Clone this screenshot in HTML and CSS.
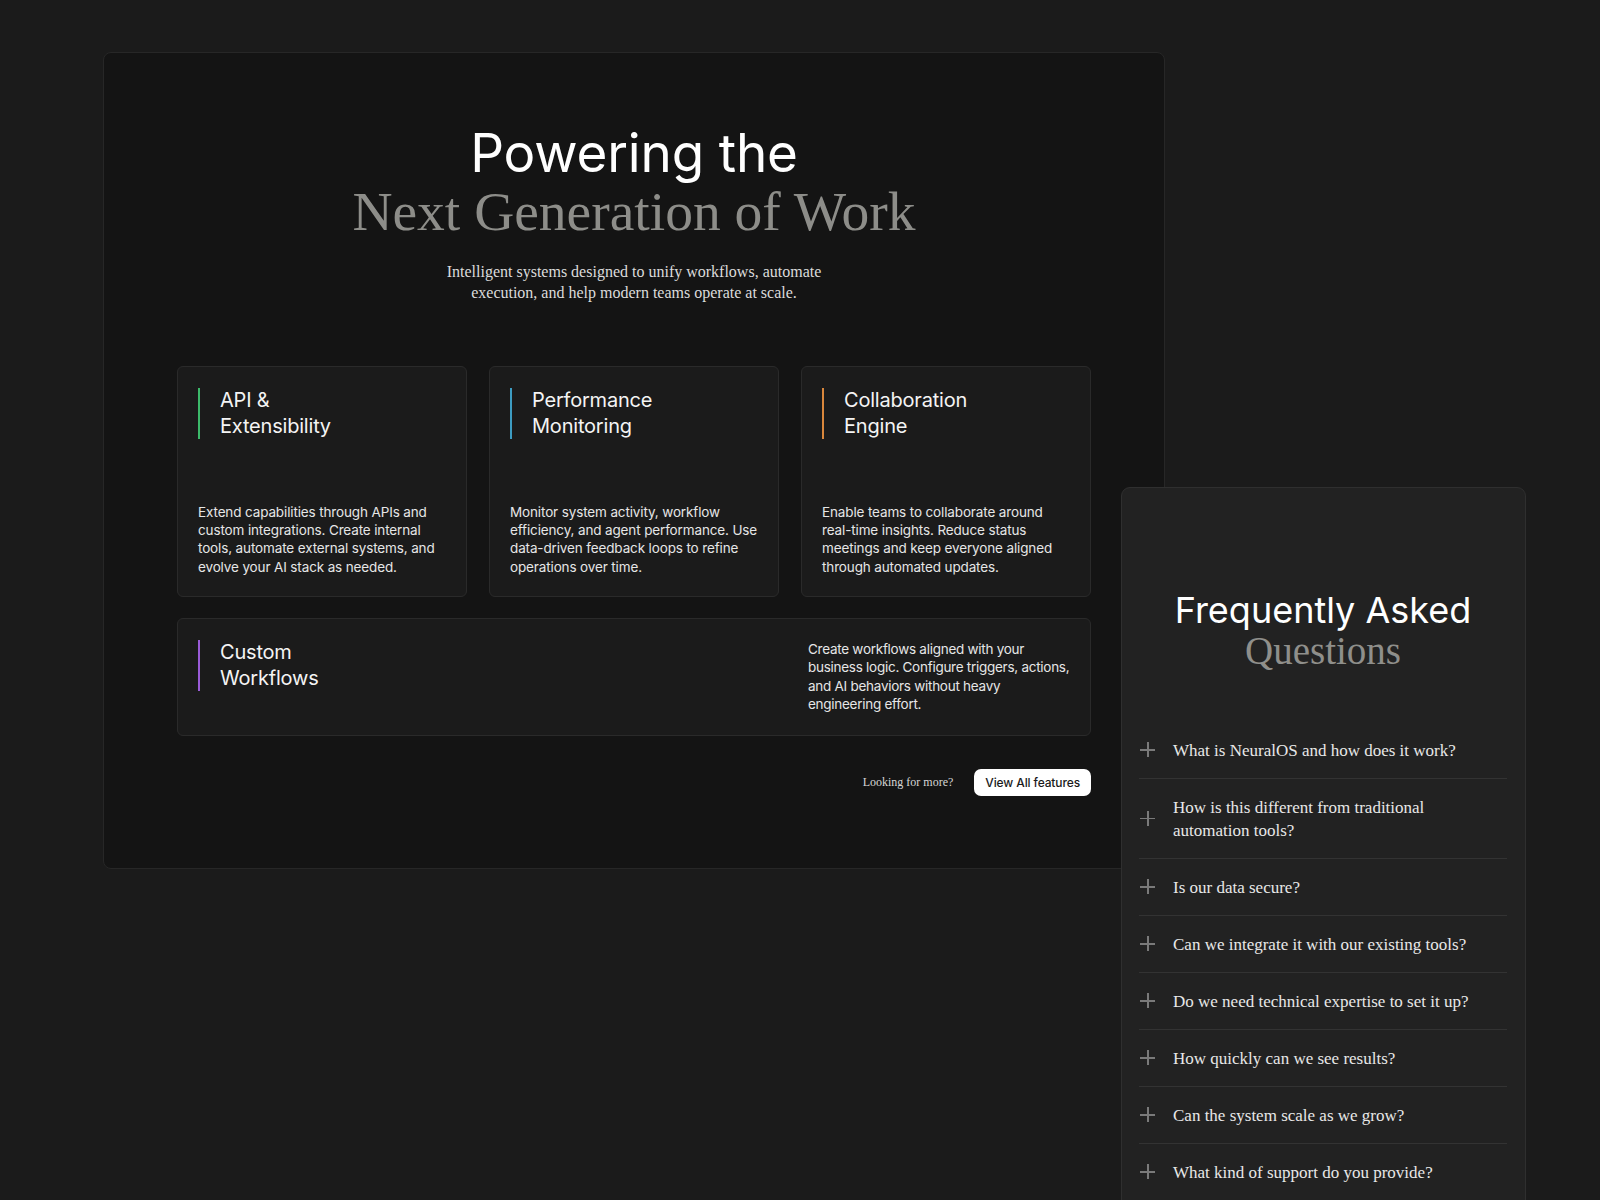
FILE: index.html
```html
<!DOCTYPE html>
<html lang="en">
<head>
<meta charset="utf-8">
<title>Powering the Next Generation of Work</title>
<link rel="stylesheet" href="styles.css">
</head>
<body>
<div class="canvas">
  <section class="features-window">
    <header class="hero">
      <h1 class="hero-title">
        <span class="hero-sans">Powering the</span>
        <span class="hero-serif">Next Generation of Work</span>
      </h1>
      <p class="hero-sub">Intelligent systems designed to unify workflows, automate<br>execution, and help modern teams operate at scale.</p>
    </header>

    <div class="feature-grid">
      <article class="feature-card">
        <h3 class="feature-title accent-green">API &amp;<br>Extensibility</h3>
        <p class="feature-desc">Extend capabilities through APIs and<br>custom integrations. Create internal<br>tools, automate external systems, and<br>evolve your AI stack as needed.</p>
      </article>
      <article class="feature-card">
        <h3 class="feature-title accent-blue">Performance<br>Monitoring</h3>
        <p class="feature-desc">Monitor system activity, workflow<br>efficiency, and agent performance. Use<br>data-driven feedback loops to refine<br>operations over time.</p>
      </article>
      <article class="feature-card">
        <h3 class="feature-title accent-orange">Collaboration<br>Engine</h3>
        <p class="feature-desc">Enable teams to collaborate around<br>real-time insights. Reduce status<br>meetings and keep everyone aligned<br>through automated updates.</p>
      </article>
      <article class="feature-card feature-wide">
        <h3 class="feature-title accent-purple">Custom<br>Workflows</h3>
        <p class="feature-desc wide-desc">Create workflows aligned with your<br>business logic. Configure triggers, actions,<br>and AI behaviors without heavy<br>engineering effort.</p>
      </article>
    </div>

    <div class="features-footer">
      <span class="more-text">Looking for more?</span>
      <button class="view-btn" type="button">View All features</button>
    </div>
  </section>

  <section class="faq-window">
    <h2 class="faq-title">
      <span class="faq-sans">Frequently Asked</span>
      <span class="faq-serif">Questions</span>
    </h2>
    <ul class="faq-list">
      <li class="faq-item"><span class="plus"></span><span class="q">What is NeuralOS and how does it work?</span></li>
      <li class="faq-item"><span class="plus"></span><span class="q">How is this different from traditional<br>automation tools?</span></li>
      <li class="faq-item"><span class="plus"></span><span class="q">Is our data secure?</span></li>
      <li class="faq-item"><span class="plus"></span><span class="q">Can we integrate it with our existing tools?</span></li>
      <li class="faq-item"><span class="plus"></span><span class="q">Do we need technical expertise to set it up?</span></li>
      <li class="faq-item"><span class="plus"></span><span class="q">How quickly can we see results?</span></li>
      <li class="faq-item"><span class="plus"></span><span class="q">Can the system scale as we grow?</span></li>
      <li class="faq-item"><span class="plus"></span><span class="q">What kind of support do you provide?</span></li>
    </ul>
  </section>
</div>
</body>
</html>
```

FILE: styles.css
```css
* { box-sizing: border-box; }

html, body {
  margin: 0;
  padding: 0;
  background: #1b1b1b;
  overflow: hidden;
}

body {
  font-family: Inter, "Liberation Sans", sans-serif;
  color: #f2f2f2;
}

.canvas {
  position: relative;
  width: 1600px;
  height: 1200px;
  overflow: hidden;
  padding: 52px 0 0 103px;
}

/* ---------- Features window ---------- */
.features-window {
  width: 1062px;
  height: 817px;
  background: #141414;
  border: 1px solid #272727;
  border-radius: 8px;
  padding: 72px 73px 0;
}

.hero {
  text-align: center;
}

.hero-title {
  margin: 0;
  font-weight: 400;
}

.hero-sans {
  display: block;
  font-family: Inter, "Liberation Sans", sans-serif;
  font-size: 53px;
  line-height: 57px;
  letter-spacing: -0.003em;
  color: #ffffff;
}

.hero-serif {
  display: block;
  font-family: "Liberation Serif", serif;
  font-size: 55.5px;
  line-height: 59px;
  color: #8d8d89;
}

.hero-sub {
  margin: 20px 0 0;
  font-family: "Liberation Serif", serif;
  font-size: 16px;
  line-height: 21px;
  color: #dcdcdc;
}

.feature-grid {
  margin-top: 63px;
  display: grid;
  grid-template-columns: repeat(3, minmax(0, 1fr));
  column-gap: 22px;
  row-gap: 21px;
}

.feature-card {
  min-height: 231px;
  background: #1b1b1b;
  border: 1px solid #2a2a2a;
  border-radius: 6px;
  padding: 21px 20px 20px;
  display: flex;
  flex-direction: column;
  justify-content: space-between;
}

.feature-title {
  margin: 0;
  font-weight: 400;
  font-size: 20px;
  line-height: 25.5px;
  letter-spacing: -0.01em;
  color: #f4f4f4;
  border-left: 2px solid #3fb96a;
  padding-left: 20px;
}

.accent-green { border-left-color: #3cb96a; }
.accent-blue { border-left-color: #3d9cc2; }
.accent-orange { border-left-color: #d9873c; }
.accent-purple { border-left-color: #9a5bd8; }

.feature-desc {
  margin: 0;
  font-size: 13.5px;
  line-height: 18.3px;
  letter-spacing: -0.01em;
  color: #e6e6e6;
  white-space: nowrap;
}

.feature-wide {
  grid-column: 1 / -1;
  min-height: 0;
  flex-direction: row;
  align-items: flex-start;
  padding-bottom: 22px;
}

.wide-desc {
  width: 262px;
  letter-spacing: -0.02em;
}

.features-footer {
  margin-top: 33px;
  display: flex;
  justify-content: flex-end;
  align-items: center;
  gap: 21px;
}

.more-text {
  font-family: "Liberation Serif", serif;
  font-size: 12px;
  color: #d6d6d6;
}

.view-btn {
  height: 27px;
  padding: 0 11px;
  border: none;
  border-radius: 7px;
  background: #ffffff;
  color: #1a1a1a;
  font-family: Inter, "Liberation Sans", sans-serif;
  font-size: 12px;
  font-weight: 500;
  letter-spacing: -0.01em;
}

/* ---------- FAQ window ---------- */
.faq-window {
  position: absolute;
  left: 1121px;
  top: 487px;
  width: 405px;
  height: 800px;
  background: #222222;
  border: 1px solid #2f2f2f;
  border-radius: 9px;
  padding: 103px 18px 0 17px;
}

.faq-title {
  margin: 0;
  text-align: center;
  font-weight: 400;
}

.faq-sans {
  display: block;
  font-family: Inter, "Liberation Sans", sans-serif;
  font-size: 36px;
  line-height: 39px;
  letter-spacing: 0;
  color: #ffffff;
}

.faq-serif {
  display: block;
  font-family: "Liberation Serif", serif;
  font-size: 39px;
  line-height: 41px;
  color: #8f8f8b;
}

.faq-list {
  list-style: none;
  margin: 51px 0 0;
  padding: 0;
}

.faq-item {
  display: flex;
  align-items: center;
  gap: 17px;
  padding: 16.5px 0;
  border-bottom: 1px solid #333333;
  font-family: "Liberation Serif", serif;
  font-size: 17px;
  line-height: 23px;
  color: #e8e8e8;
}

.plus {
  position: relative;
  flex: 0 0 16px;
  width: 16px;
  height: 16px;
  margin-left: 1px;
}

.plus::before,
.plus::after {
  content: "";
  position: absolute;
  background: #7a7a7a;
}

.plus::before {
  left: 0;
  right: 1px;
  top: 7px;
  height: 1.5px;
}

.plus::after {
  top: 0;
  bottom: 1px;
  left: 7px;
  width: 1.5px;
}
```
